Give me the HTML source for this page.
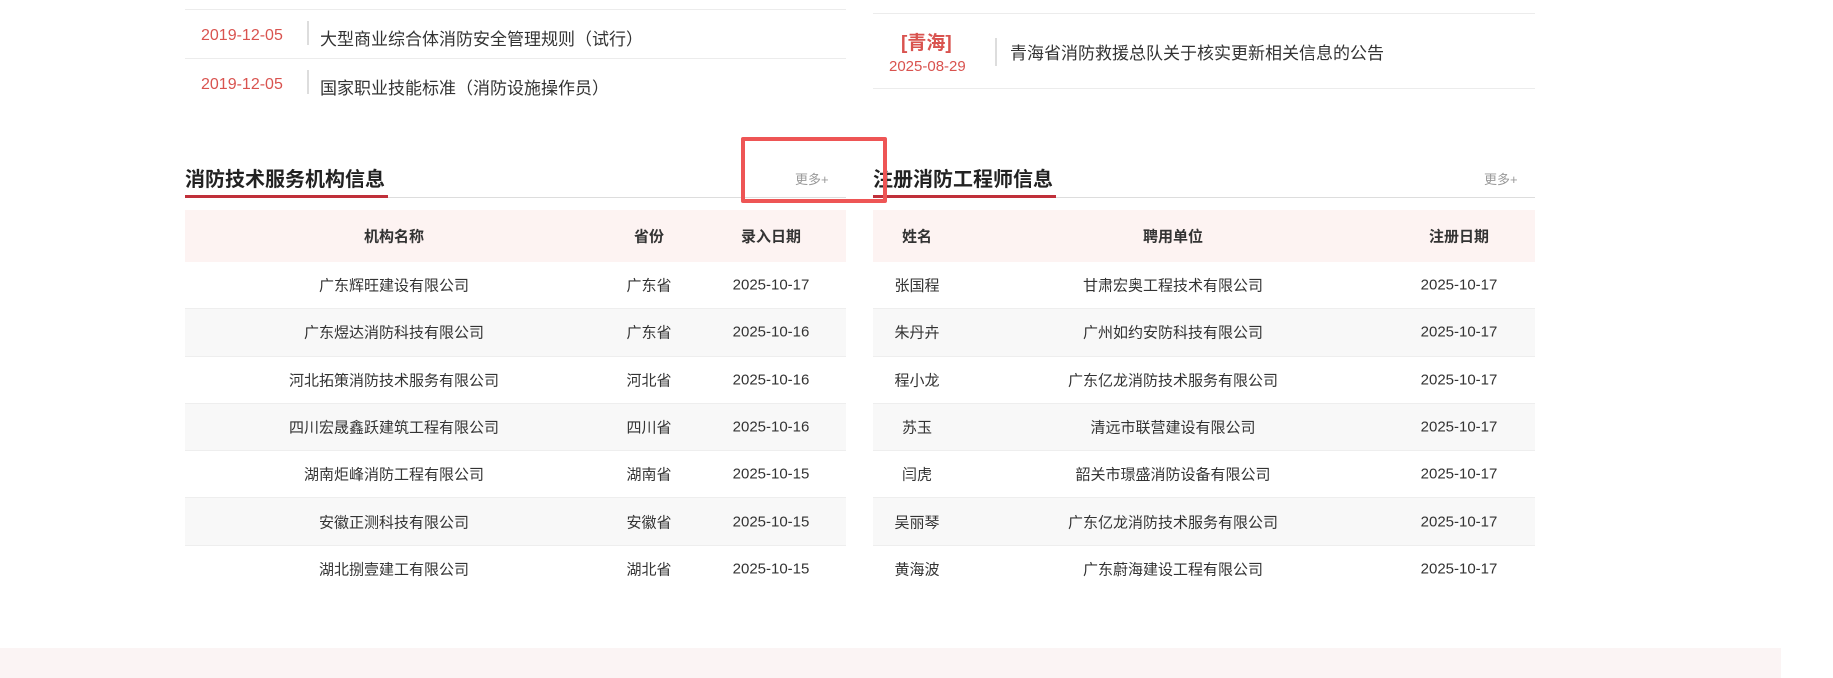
<!DOCTYPE html>
<html><head><meta charset="utf-8"><style>
*{margin:0;padding:0;box-sizing:border-box}
body{width:1833px;height:678px;background:#fff;position:relative;overflow:hidden;font-family:"Liberation Sans","Noto Sans CJK SC",sans-serif;color:#333}
.a{position:absolute;white-space:nowrap}
.hl{position:absolute;height:1px;background:#ececec}
.red{color:#d9534f}
.vd{position:absolute;width:2px;background:#ddd}
.tbl{position:absolute;top:210px}
.row{position:relative;height:47.3px;border-bottom:1px solid #eee;font-size:15px}
.row.h{height:52px;background:#fdf3f2;font-weight:bold;border:none}
.row.g{background:#f8f8f8}
.row span{position:absolute;top:50%;transform:translate(-50%,-50%);white-space:nowrap}
.ttl{font-size:20px;font-weight:bold;color:#222}
.more{font-size:13px;color:#999}
</style></head><body>
<div class="hl" style="left:185px;top:9px;width:661px"></div>
<div class="hl" style="left:185px;top:58px;width:661px"></div>
<div class="a red" style="left:201px;top:27px;font-size:16px">2019-12-05</div>
<div class="vd" style="left:307px;top:21px;height:24px"></div>
<div class="a" style="left:320px;top:25px;font-size:17px">大型商业综合体消防安全管理规则（试行）</div>
<div class="a red" style="left:201px;top:76px;font-size:16px">2019-12-05</div>
<div class="vd" style="left:307px;top:70px;height:24px"></div>
<div class="a" style="left:320px;top:74px;font-size:17px">国家职业技能标准（消防设施操作员）</div>

<div class="hl" style="left:873px;top:13px;width:662px"></div>
<div class="hl" style="left:873px;top:88px;width:662px"></div>
<div class="a red" style="left:901px;top:28px;font-size:19px;font-weight:bold">[青海]</div>
<div class="a red" style="left:889px;top:58px;font-size:15px">2025-08-29</div>
<div class="vd" style="left:995px;top:38px;height:28px"></div>
<div class="a" style="left:1010px;top:39px;font-size:17px">青海省消防救援总队关于核实更新相关信息的公告</div>

<div class="a ttl" style="left:185px;top:163px">消防技术服务机构信息</div>
<div class="hl" style="left:185px;top:197px;width:661px;background:#ddd"></div>
<div class="a" style="left:185px;top:195px;width:203px;height:3px;background:#c0303a"></div>
<div class="a more" style="left:795px;top:169px">更多+</div>

<div class="a ttl" style="left:873px;top:163px">注册消防工程师信息</div>
<div class="hl" style="left:873px;top:197px;width:662px;background:#ddd"></div>
<div class="a" style="left:873px;top:195px;width:183px;height:3px;background:#c0303a"></div>
<div class="a more" style="left:1484px;top:169px">更多+</div>

<div class="tbl" style="left:185px;width:661px">
<div class="row h"><span style="left:209px">机构名称</span><span style="left:464px">省份</span><span style="left:586px">录入日期</span></div>
<div class="row"><span style="left:209px">广东辉旺建设有限公司</span><span style="left:464px">广东省</span><span style="left:586px">2025-10-17</span></div>
<div class="row g"><span style="left:209px">广东煜达消防科技有限公司</span><span style="left:464px">广东省</span><span style="left:586px">2025-10-16</span></div>
<div class="row"><span style="left:209px">河北拓策消防技术服务有限公司</span><span style="left:464px">河北省</span><span style="left:586px">2025-10-16</span></div>
<div class="row g"><span style="left:209px">四川宏晟鑫跃建筑工程有限公司</span><span style="left:464px">四川省</span><span style="left:586px">2025-10-16</span></div>
<div class="row"><span style="left:209px">湖南炬峰消防工程有限公司</span><span style="left:464px">湖南省</span><span style="left:586px">2025-10-15</span></div>
<div class="row g"><span style="left:209px">安徽正测科技有限公司</span><span style="left:464px">安徽省</span><span style="left:586px">2025-10-15</span></div>
<div class="row" style="border:none"><span style="left:209px">湖北捌壹建工有限公司</span><span style="left:464px">湖北省</span><span style="left:586px">2025-10-15</span></div>
</div>

<div class="tbl" style="left:873px;width:662px">
<div class="row h"><span style="left:44px">姓名</span><span style="left:300px">聘用单位</span><span style="left:586px">注册日期</span></div>
<div class="row"><span style="left:44px">张国程</span><span style="left:300px">甘肃宏奥工程技术有限公司</span><span style="left:586px">2025-10-17</span></div>
<div class="row g"><span style="left:44px">朱丹卉</span><span style="left:300px">广州如约安防科技有限公司</span><span style="left:586px">2025-10-17</span></div>
<div class="row"><span style="left:44px">程小龙</span><span style="left:300px">广东亿龙消防技术服务有限公司</span><span style="left:586px">2025-10-17</span></div>
<div class="row g"><span style="left:44px">苏玉</span><span style="left:300px">清远市联营建设有限公司</span><span style="left:586px">2025-10-17</span></div>
<div class="row"><span style="left:44px">闫虎</span><span style="left:300px">韶关市璟盛消防设备有限公司</span><span style="left:586px">2025-10-17</span></div>
<div class="row g"><span style="left:44px">吴丽琴</span><span style="left:300px">广东亿龙消防技术服务有限公司</span><span style="left:586px">2025-10-17</span></div>
<div class="row" style="border:none"><span style="left:44px">黄海波</span><span style="left:300px">广东蔚海建设工程有限公司</span><span style="left:586px">2025-10-17</span></div>
</div>

<div class="a" style="left:741px;top:137px;width:146px;height:66px;border:4px solid #ee5555;border-radius:2px"></div>

<div class="a" style="left:0;top:648px;width:1781px;height:30px;background:#fbf4f4"></div>
</body></html>
